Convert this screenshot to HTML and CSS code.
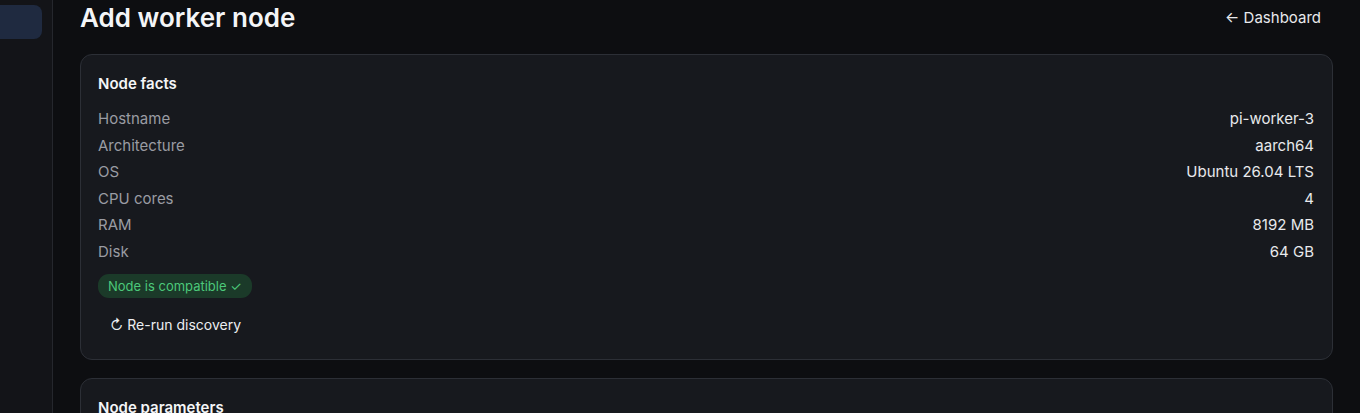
FILE: index.html
```html
<!DOCTYPE html>
<html lang="en">

<head>
    <meta charset="UTF-8">
    <meta name="viewport" content="width=device-width, initial-scale=1.0">
    <title>Add worker node</title>
    <link rel="stylesheet" href="styles.css">
</head>

<body>
    <aside class="sidebar">
        <div class="nav-item active"></div>
    </aside>

    <main class="content">
        <div class="page-header">
            <h1>Add worker node</h1>
            <a class="back-link" href="#">&larr; Dashboard</a>
        </div>

        <section class="card">
            <h2>Node facts</h2>
            <dl class="facts">
                <dt>Hostname</dt>
                <dd>pi-worker-3</dd>
                <dt>Architecture</dt>
                <dd>aarch64</dd>
                <dt>OS</dt>
                <dd>Ubuntu 26.04 LTS</dd>
                <dt>CPU cores</dt>
                <dd>4</dd>
                <dt>RAM</dt>
                <dd>8192 MB</dd>
                <dt>Disk</dt>
                <dd>64 GB</dd>
            </dl>
            <span class="badge ok">Node is compatible &#10003;</span>
            <button class="ghost-button">&#8635; Re-run discovery</button>
        </section>

        <section class="card">
            <h2>Node parameters</h2>
        </section>
    </main>
</body>

</html>
```

FILE: styles.css
```css
body {
    margin: 0;
    font-family: Inter, "Liberation Sans", sans-serif;
    background-color: #0d0e11;
    color: #e8e9ec;
    display: flex;
    min-height: 100vh;
}

.sidebar {
    width: 52px;
    flex-shrink: 0;
    background-color: #131418;
    border-right: 1px solid #25272d;
    padding-top: 5px;
}

.nav-item {
    height: 34px;
    width: 50px;
    margin-left: -8px;
    border-radius: 8px;
}

.nav-item.active {
    background-color: #1f2a40;
}

.content {
    flex: 1;
    padding: 0 27px 0 27px;
}

.page-header {
    display: flex;
    justify-content: space-between;
    align-items: center;
    height: 34px;
    margin-bottom: 20px;
}

.page-header h1 {
    margin: 0;
    font-size: 26px;
    font-weight: 600;
    color: #f4f5f7;
}

.back-link {
    color: #e8e9ec;
    text-decoration: none;
    font-size: 15px;
    margin-right: 12px;
}

.card {
    background-color: #17191e;
    border: 1px solid #2c2f36;
    border-radius: 12px;
    padding: 18px 18px 18px 17px;
    margin-bottom: 18px;
}

.card h2 {
    margin: 1px 0 17px 0;
    font-size: 15px;
    font-weight: 600;
    color: #f4f5f7;
}

.facts {
    display: grid;
    grid-template-columns: 1fr auto;
    row-gap: 8px;
    margin: 0 0 13px 0;
    font-size: 15px;
    line-height: 18.5px;
}

.facts dt {
    color: #9a9ca3;
}

.facts dd {
    margin: 0;
    text-align: right;
    color: #e8e9ec;
}

.badge {
    display: inline-block;
    font-size: 13px;
    padding: 4px 10px;
    border-radius: 11px;
}

.badge.ok {
    background-color: #1b3a29;
    color: #4cc97a;
}

.ghost-button {
    display: block;
    margin-top: 10px;
    background: none;
    border: none;
    color: #eceef1;
    font-family: inherit;
    font-size: 14px;
    padding: 8px 12px;
    cursor: pointer;
}
```
